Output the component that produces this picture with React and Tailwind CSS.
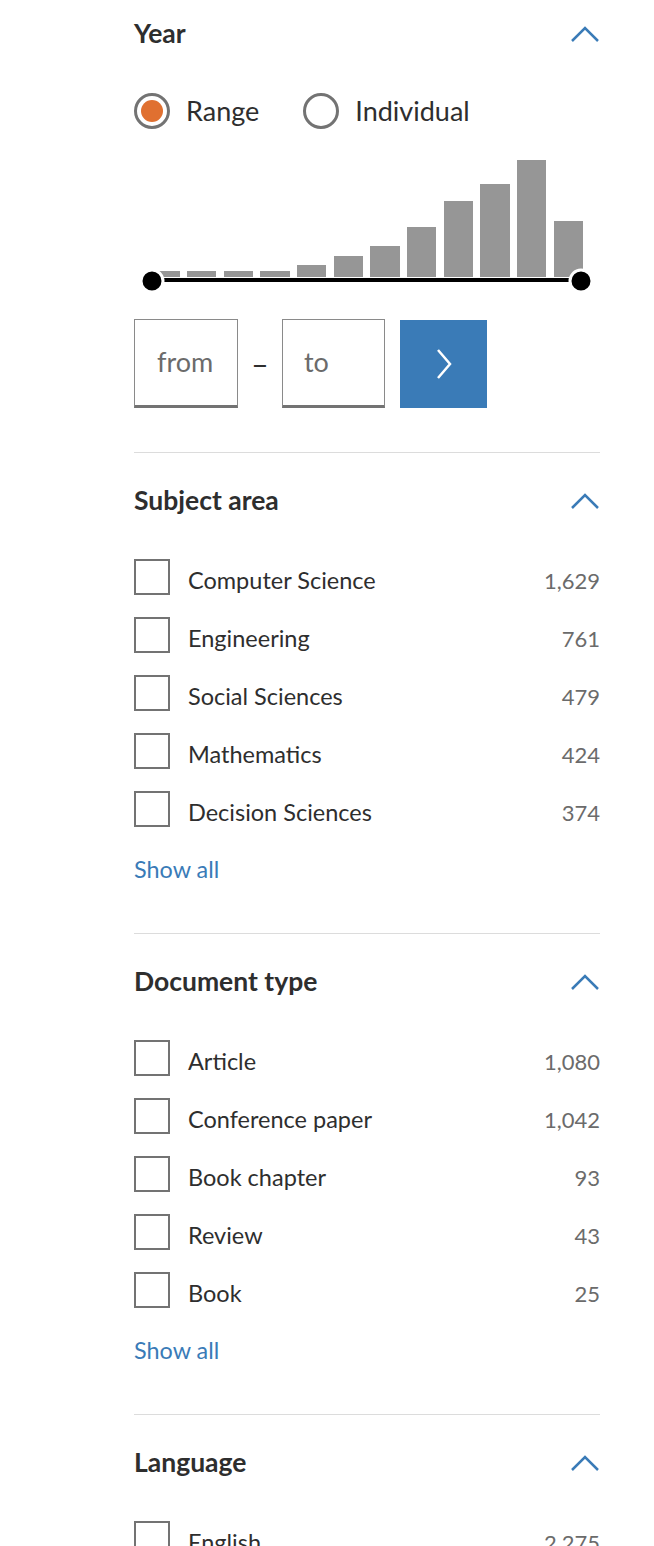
import { useState } from 'react';

const bars = [
  { x: 25, w: 21, h: 6 },
  { x: 53, w: 29, h: 6 },
  { x: 90, w: 29, h: 6 },
  { x: 126, w: 30, h: 6 },
  { x: 163, w: 29, h: 12 },
  { x: 200, w: 29, h: 21 },
  { x: 236, w: 30, h: 31 },
  { x: 273, w: 29, h: 50 },
  { x: 310, w: 29, h: 76 },
  { x: 346, w: 30, h: 93 },
  { x: 383, w: 29, h: 117 },
  { x: 420, w: 29, h: 56 },
];

const subjects = [
  ['Computer Science', '1,629'],
  ['Engineering', '761'],
  ['Social Sciences', '479'],
  ['Mathematics', '424'],
  ['Decision Sciences', '374'],
];

const docTypes = [
  ['Article', '1,080'],
  ['Conference paper', '1,042'],
  ['Book chapter', '93'],
  ['Review', '43'],
  ['Book', '25'],
];

function ChevronUp() {
  return (
    <svg width="30" height="18" viewBox="0 0 30 18" fill="none">
      <path d="M2 16 L15 3 L28 16" stroke="#3a7bb7" strokeWidth="2.5" />
    </svg>
  );
}

function SectionHeader({ title }) {
  return (
    <div className="flex h-8 items-center justify-between">
      <h2 className="text-[26.5px] font-bold text-[#2e2e2e]">{title}</h2>
      <ChevronUp />
    </div>
  );
}

function CheckRow({ label, count }) {
  return (
    <label className="flex h-[58px] items-center">
      <span className="h-9 w-9 shrink-0 border-2 border-[#737373] bg-white" />
      <span className="ml-[18px] flex-1 pt-[7px] text-[23.5px] text-[#2e2e2e]">{label}</span>
      <span className="pt-[7px] text-[22px] text-[#6b6b6b]">{count}</span>
    </label>
  );
}

function FacetSection({ title, items }) {
  return (
    <section className="border-t border-[#dcdcdc] pt-8 pb-12">
      <SectionHeader title={title} />
      <div className="mt-[31px]">
        {items.map(([label, count]) => (
          <CheckRow key={label} label={label} count={count} />
        ))}
      </div>
      <div className="mt-[17px] flex h-[30px] items-center text-[23.4px] text-[#3a7bb7]">Show all</div>
    </section>
  );
}

export default function App() {
  const [mode, setMode] = useState('range');

  return (
    <div className="min-h-screen bg-white font-['Lato',sans-serif]">
      <div className="ml-[134px] w-[466px] pt-[18px]">
        {/* Year */}
        <section className="pb-11">
          <SectionHeader title="Year" />
          <div className="mt-[43px] flex h-9 items-center">
            <button onClick={() => setMode('range')} className="flex items-center">
              <span className="flex h-9 w-9 items-center justify-center rounded-full border-[3px] border-[#737373]">
                {mode === 'range' && <span className="h-[22px] w-[22px] rounded-full bg-[#e07030]" />}
              </span>
              <span className="ml-[16px] text-[27px] text-[#2e2e2e]">Range</span>
            </button>
            <button onClick={() => setMode('individual')} className="ml-[44px] flex items-center">
              <span className="flex h-9 w-9 items-center justify-center rounded-full border-[3px] border-[#737373]">
                {mode === 'individual' && <span className="h-[22px] w-[22px] rounded-full bg-[#e07030]" />}
              </span>
              <span className="ml-[16px] text-[27px] text-[#2e2e2e]">Individual</span>
            </button>
          </div>

          <svg className="mt-[21px] block" width="466" height="150" viewBox="0 0 466 150">
            {bars.map((b, i) => (
              <rect key={i} x={b.x} y={127 - b.h} width={b.w} height={b.h} fill="#969696" />
            ))}
            <line x1="18" y1="130" x2="447" y2="130" stroke="#000" strokeWidth="4" />
            <circle cx="18" cy="131" r="11" fill="#000" stroke="#fff" strokeWidth="3" />
            <circle cx="447" cy="131" r="11" fill="#000" stroke="#fff" strokeWidth="3" />
          </svg>

          <div className="mt-[19px] flex items-center">
            <div className="flex h-[89px] w-[104px] items-center border border-b-[3px] border-[#8a8a8a] border-b-[#737373] pl-[22px] text-[27px] text-[#6b6b6b]">
              from
            </div>
            <div className="flex w-[44px] justify-center text-[30px] text-[#2e2e2e]">–</div>
            <div className="flex h-[89px] w-[103px] items-center border border-b-[3px] border-[#8a8a8a] border-b-[#737373] pl-[21px] text-[27px] text-[#6b6b6b]">
              to
            </div>
            <button className="ml-[15px] flex h-[88px] w-[87px] items-center justify-center bg-[#3a7bb7]">
              <svg width="16" height="32" viewBox="0 0 16 32" fill="none">
                <path d="M2 2 L14 16 L2 30" stroke="#fff" strokeWidth="2.5" />
              </svg>
            </button>
          </div>
        </section>

        <FacetSection title="Subject area" items={subjects} />
        <FacetSection title="Document type" items={docTypes} />

        <section className="border-t border-[#dcdcdc] pt-8">
          <SectionHeader title="Language" />
          <div className="mt-[31px]">
            <CheckRow label="English" count="2,275" />
          </div>
        </section>
      </div>
    </div>
  );
}
